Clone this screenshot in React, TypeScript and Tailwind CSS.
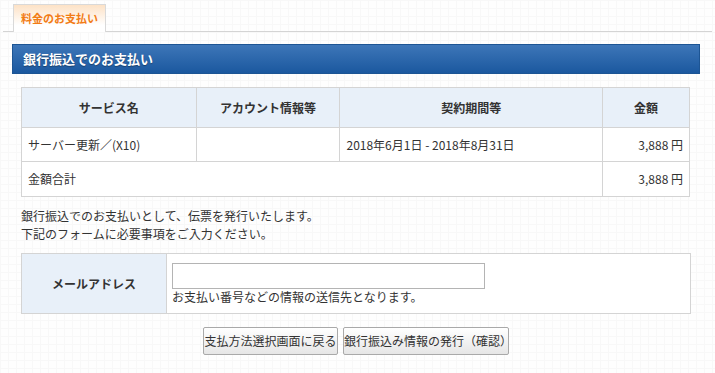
const FONT = "font-['Noto_Sans_CJK_JP','Noto_Sans',sans-serif]";

export default function App() {
  return (
    <div
      className={`${FONT} h-[373px] w-[715px] overflow-hidden bg-[#fefefe] text-[12px] text-[#333] bg-[linear-gradient(#f8f8f8_1px,transparent_1px),linear-gradient(90deg,#f8f8f8_1px,transparent_1px)] bg-[size:8px_8px]`}
    >
      {/* tab strip */}
      <div className="mx-[3px] flex border-b border-[#d4d4d4] pl-[10px] pt-[4px]">
        <div className="-mb-px flex h-[28px] w-[93px] items-center justify-center border border-b-0 border-[#d9d9d9] bg-[linear-gradient(#fde2c6,#ffffff_75%)] text-[11px] font-bold text-[#f27c16]">
          料金のお支払い
        </div>
      </div>

      {/* section title */}
      <div className="ml-[12px] mt-[12px] flex h-[30px] w-[688px] items-center border border-[#1d5594] bg-[linear-gradient(#3d76b8,#1b589f)] pl-[10px] text-[13px] font-bold text-white [text-shadow:0_1px_1px_rgba(0,0,0,0.35)]">
        銀行振込でのお支払い
      </div>

      <table className="ml-[21px] mt-[13px] w-[669px] border-collapse bg-white">
        <colgroup>
          <col className="w-[175px]" />
          <col className="w-[144px]" />
          <col className="w-[263px]" />
          <col className="w-[87px]" />
        </colgroup>
        <thead>
          <tr className="h-[40px] bg-[#e8f0f9] font-bold">
            <th className="border border-[#d4d4d4] font-bold">サービス名</th>
            <th className="border border-[#d4d4d4] font-bold">アカウント情報等</th>
            <th className="border border-[#d4d4d4] font-bold">契約期間等</th>
            <th className="border border-[#d4d4d4] font-bold">金額</th>
          </tr>
        </thead>
        <tbody>
          <tr className="h-[34px]">
            <td className="border border-[#d4d4d4] pl-[6px]">サーバー更新／(X10)</td>
            <td className="border border-[#d4d4d4]"></td>
            <td className="border border-[#d4d4d4] pl-[6px]">2018年6月1日 - 2018年8月31日</td>
            <td className="border border-[#d4d4d4] pr-[6px] text-right">3,888 円</td>
          </tr>
          <tr className="h-[35px]">
            <td colSpan={3} className="border border-[#d4d4d4] pl-[6px]">
              金額合計
            </td>
            <td className="border border-[#d4d4d4] pr-[6px] text-right">3,888 円</td>
          </tr>
        </tbody>
      </table>

      <p className="ml-[21px] mt-[10px] leading-[18px]">
        銀行振込でのお支払いとして、伝票を発行いたします。
        <br />
        下記のフォームに必要事項をご入力ください。
      </p>

      <table className="ml-[21px] mt-[10px] w-[670px] border-collapse">
        <tbody>
          <tr className="h-[60px]">
            <th className="w-[145px] border border-[#d4d4d4] bg-[#e8f0f9] font-bold">
              メールアドレス
            </th>
            <td className="border border-[#d4d4d4] bg-white pl-[5px] align-top">
              <input
                type="text"
                className="mt-[9px] block h-[26px] w-[313px] border border-[#b4b4b4] bg-white outline-none"
              />
              <div className="leading-[16px]">お支払い番号などの情報の送信先となります。</div>
            </td>
          </tr>
        </tbody>
      </table>

      <div className="ml-[21px] mt-[13px] flex w-[670px] justify-center gap-[5px]">
        <button className="h-[28px] w-[135px] rounded-[2px] border border-[#a9a9a9] bg-[linear-gradient(#ffffff,#e6e6e6)] text-[12px] text-[#333]">
          支払方法選択画面に戻る
        </button>
        <button className="h-[28px] w-[166px] rounded-[2px] border border-[#a9a9a9] bg-[linear-gradient(#ffffff,#e6e6e6)] text-[12px] text-[#333]">
          銀行振込み情報の発行（確認）
        </button>
      </div>
    </div>
  );
}
